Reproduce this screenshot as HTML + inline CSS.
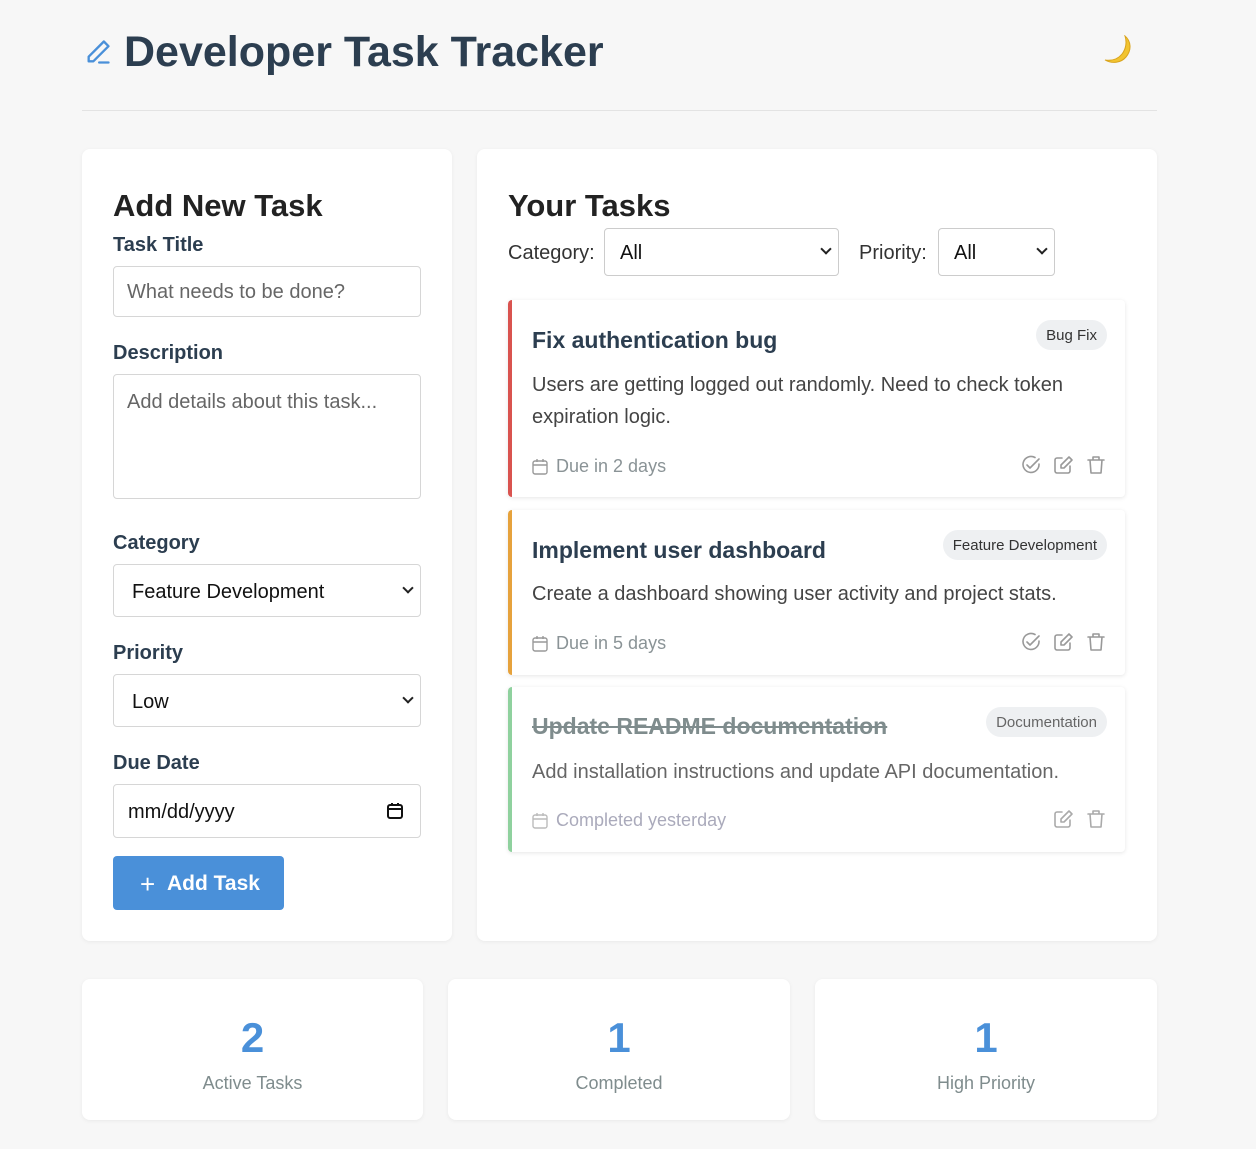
<!DOCTYPE html>
<html><head><meta charset="utf-8"><style>
*{box-sizing:border-box;margin:0;padding:0}
body{width:1256px;height:1149px;background:#f7f7f7;font-family:"Liberation Sans","DejaVu Sans",sans-serif;color:#2c3e50;position:relative;overflow:hidden}
.a{position:absolute}
.card{position:absolute;background:#fff;border-radius:8px;box-shadow:0 1px 4px rgba(0,0,0,.06)}
h1{position:absolute;left:124px;top:28px;font-size:43px;font-weight:bold;color:#2c3e50;letter-spacing:0}
.lbl{position:absolute;left:113px;font-size:20px;font-weight:bold;color:#2c3e50}
.inp{position:absolute;left:113px;width:308px;border:1px solid #d6d6d6;border-radius:4px;background:#fff;font-size:20px;color:#666;padding-left:13px}
.sel{color:#111;padding-left:18px}
.chev{position:absolute;right:8px;width:8px;height:8px;border-right:2px solid #222;border-bottom:2px solid #222;transform:rotate(45deg)}
.task{position:absolute;left:508px;width:617px;background:#fff;border-radius:4px;box-shadow:0 1px 4px rgba(0,0,0,.1);overflow:hidden}
.task .bar{position:absolute;left:0;top:0;bottom:0;width:4px}
.tt{position:absolute;left:24px;font-size:23px;font-weight:bold;color:#2c3e50}
.tag{position:absolute;right:18px;background:#eef0f2;border-radius:15px;font-size:15px;color:#333;padding:7px 10px;height:30px}
.desc{position:absolute;left:24px;font-size:20px;color:#444;line-height:32px}
.due{position:absolute;left:24px;font-size:18px;color:#8a9396;padding-left:24px}
.due svg{position:absolute;left:0;top:2px}
.icons{position:absolute;right:18px}
.num{position:absolute;width:100%;text-align:center;top:35px;font-size:42px;font-weight:bold;color:#4a90d9}
.sl{position:absolute;width:100%;text-align:center;top:94px;font-size:18px;color:#7f8c8d}
</style></head><body>
<svg class="a" style="left:84px;top:38px" width="28" height="28" viewBox="0 0 24 24" fill="none" stroke="#4a90d9" stroke-width="2" stroke-linecap="round" stroke-linejoin="round"><path d="M17 3l4 4L8 20H4v-4z"/><path d="M13 21h8"/></svg>
<h1>Developer Task Tracker</h1>
<svg class="a" style="left:1101px;top:35px" width="32" height="30" viewBox="0 0 32 30"><path d="M24 1c6 5 7 14 1 21-5 6-14 7-21 3 7 1 13-1 17-6 4-5 5-12 3-18z" fill="#f2c430" stroke="#d9a41e" stroke-width="1"/></svg>
<div class="a" style="left:82px;top:110px;width:1075px;height:1px;background:#e3e3e3"></div>

<div class="card" style="left:82px;top:149px;width:370px;height:792px"></div>
<div class="a" style="left:113px;top:188px;font-size:31px;font-weight:bold;color:#222">Add New Task</div>
<div class="lbl" style="top:234px">Task Title</div>
<div class="inp" style="top:266px;height:51px;line-height:51px">What needs to be done?</div>
<div class="lbl" style="top:342px">Description</div>
<div class="inp" style="top:374px;height:125px;padding-top:16px">Add details about this task...</div>
<div class="lbl" style="top:532px">Category</div>
<div class="inp sel" style="top:564px;height:53px;line-height:54px">Feature Development<span class="chev" style="top:19px"></span></div>
<div class="lbl" style="top:642px">Priority</div>
<div class="inp sel" style="top:674px;height:53px;line-height:54px">Low<span class="chev" style="top:19px"></span></div>
<div class="lbl" style="top:752px">Due Date</div>
<div class="inp" style="top:784px;height:54px;line-height:55px;color:#111;padding-left:14px">mm/dd/yyyy
<svg class="a" style="right:16px;top:17px" width="18" height="18" viewBox="0 0 18 18" fill="none" stroke="#111" stroke-width="2"><rect x="2" y="3" width="14" height="13" rx="2"/><path d="M2 7h14M6 1v3M12 1v3"/></svg></div>
<div class="a" style="left:113px;top:856px;width:171px;height:54px;background:#4a90d9;border-radius:4px;color:#fff;font-size:21px;font-weight:bold;line-height:56px;padding-left:54px">Add Task</div>
<div class="a" style="left:140px;top:867px;color:#fff;font-size:26px;line-height:34px">+</div>

<div class="card" style="left:477px;top:149px;width:680px;height:792px"></div>
<div class="a" style="left:508px;top:188px;font-size:31px;font-weight:bold;color:#222">Your Tasks</div>
<div class="a" style="left:508px;top:242px;font-size:20px;color:#333">Category:</div>
<div class="a" style="left:604px;top:228px;width:235px;height:48px;border:1px solid #ccc;border-radius:4px;background:#fff;font-size:20px;line-height:48px;padding-left:15px;color:#111">All<span class="chev" style="top:16px"></span></div>
<div class="a" style="left:859px;top:242px;font-size:20px;color:#333">Priority:</div>
<div class="a" style="left:938px;top:228px;width:117px;height:48px;border:1px solid #ccc;border-radius:4px;background:#fff;font-size:20px;line-height:48px;padding-left:15px;color:#111">All<span class="chev" style="top:16px"></span></div>

<div class="task" style="top:300px;height:197px"><div class="bar" style="background:#d9534f"></div>
<div class="tt" style="top:27px">Fix authentication bug</div><div class="tag" style="top:20px">Bug Fix</div>
<div class="desc" style="top:69px">Users are getting logged out randomly. Need to check token<br>expiration logic.</div>
<div class="due" style="top:156px"><svg width="16" height="17" viewBox="0 0 16 17" fill="none" stroke="#999" stroke-width="1.4"><rect x="1" y="3" width="14" height="13" rx="2"/><path d="M1 7h14M5 1v3M11 1v3"/></svg>Due in 2 days</div>
<svg class="icons" style="top:155px" width="86" height="20" viewBox="0 0 86 20" fill="none" stroke="#999" stroke-width="1.6" stroke-linecap="round" stroke-linejoin="round"><path d="M18 9a8 8 0 1 1-4-6.5"/><path d="M6 10l3 3 9-9"/><path d="M41 3h-5a2 2 0 0 0-2 2v11a2 2 0 0 0 2 2h11a2 2 0 0 0 2-2v-5"/><path d="M48 2l3 3-8 8h-3v-3z"/><path d="M67 5h16M72 5V2h6v3M69 5l1 13h10l1-13"/></svg>
</div>
<div class="task" style="top:510px;height:165px"><div class="bar" style="background:#e6a23c"></div>
<div class="tt" style="top:27px">Implement user dashboard</div><div class="tag" style="top:20px">Feature Development</div>
<div class="desc" style="top:68px">Create a dashboard showing user activity and project stats.</div>
<div class="due" style="top:123px"><svg width="16" height="17" viewBox="0 0 16 17" fill="none" stroke="#999" stroke-width="1.4"><rect x="1" y="3" width="14" height="13" rx="2"/><path d="M1 7h14M5 1v3M11 1v3"/></svg>Due in 5 days</div>
<svg class="icons" style="top:122px" width="86" height="20" viewBox="0 0 86 20" fill="none" stroke="#999" stroke-width="1.6" stroke-linecap="round" stroke-linejoin="round"><path d="M18 9a8 8 0 1 1-4-6.5"/><path d="M6 10l3 3 9-9"/><path d="M41 3h-5a2 2 0 0 0-2 2v11a2 2 0 0 0 2 2h11a2 2 0 0 0 2-2v-5"/><path d="M48 2l3 3-8 8h-3v-3z"/><path d="M67 5h16M72 5V2h6v3M69 5l1 13h10l1-13"/></svg>
</div>
<div class="task" style="top:687px;height:165px;"><div class="bar" style="background:#8fd19e"></div>
<div class="tt" style="top:26px;color:#7f8c8d;text-decoration:line-through">Update README documentation</div><div class="tag" style="top:20px;color:#666">Documentation</div>
<div class="desc" style="top:69px;color:#666">Add installation instructions and update API documentation.</div>
<div class="due" style="top:123px;color:#aab"><svg width="16" height="17" viewBox="0 0 16 17" fill="none" stroke="#bbb" stroke-width="1.4"><rect x="1" y="3" width="14" height="13" rx="2"/><path d="M1 7h14M5 1v3M11 1v3"/></svg>Completed yesterday</div>
<svg class="icons" style="top:122px" width="86" height="20" viewBox="0 0 86 20" fill="none" stroke="#aaa" stroke-width="1.6" stroke-linecap="round" stroke-linejoin="round"><path d="M41 3h-5a2 2 0 0 0-2 2v11a2 2 0 0 0 2 2h11a2 2 0 0 0 2-2v-5"/><path d="M48 2l3 3-8 8h-3v-3z"/><path d="M67 5h16M72 5V2h6v3M69 5l1 13h10l1-13"/></svg>
</div>

<div class="card" style="left:82px;top:979px;width:341px;height:141px"><div class="num">2</div><div class="sl">Active Tasks</div></div>
<div class="card" style="left:448px;top:979px;width:342px;height:141px"><div class="num">1</div><div class="sl">Completed</div></div>
<div class="card" style="left:815px;top:979px;width:342px;height:141px"><div class="num">1</div><div class="sl">High Priority</div></div>
</body></html>
